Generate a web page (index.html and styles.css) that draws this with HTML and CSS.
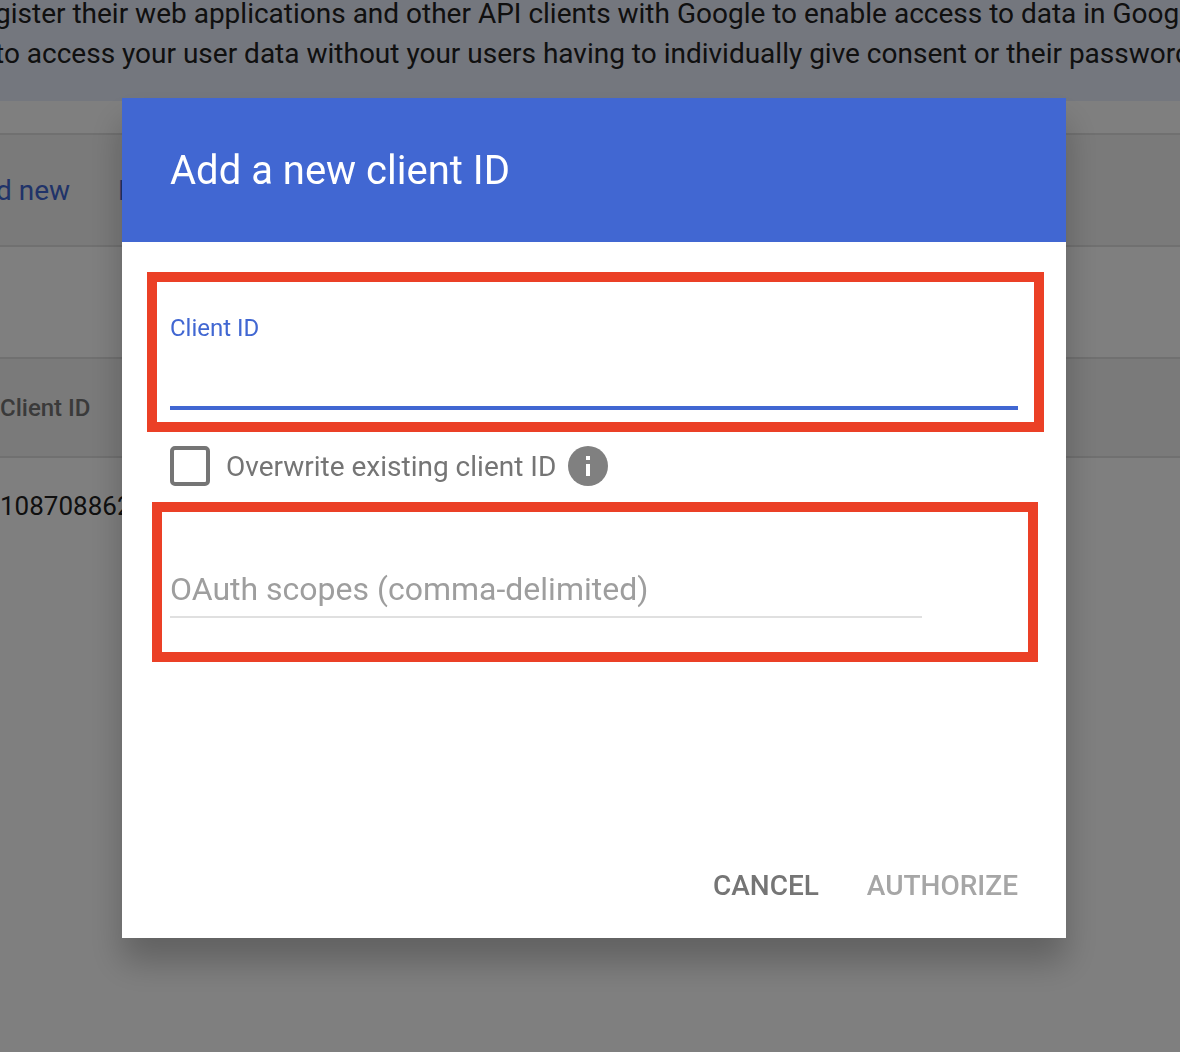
FILE: index.html
```
<!DOCTYPE html>
<html lang="en">
<head>
<meta charset="utf-8">
<meta name="viewport" content="width=device-width, initial-scale=1">
<title>Add a new client ID</title>
<link rel="stylesheet" href="styles.css">
</head>
<body>
<main class="page">
  <div class="banner">
    <p class="banner-line">gister their web applications and other API clients with Google to enable access to data in Goog</p>
    <p class="banner-line">to access your user data without your users having to individually give consent or their password</p>
  </div>
  <nav class="toolbar">
    <a class="toolbar-link" href="#add">d new</a>
    <a class="toolbar-link" href="#download">D</a>
  </nav>
  <div class="filter-row"></div>
  <table class="clients">
    <thead><tr><th scope="col">Client ID</th></tr></thead>
    <tbody><tr><td>108708862</td></tr></tbody>
  </table>
</main>

<div class="backdrop">
  <form class="dialog" role="dialog" aria-modal="true" aria-labelledby="dialog-title">
    <header class="dialog-header">
      <h1 class="dialog-title" id="dialog-title">Add a new client ID</h1>
    </header>
    <div class="dialog-body">
      <div class="field field-client highlight">
        <label class="field-label" for="client-id">Client ID</label>
        <input class="field-input" id="client-id" type="text">
      </div>
      <div class="option">
        <input class="option-box" id="overwrite" type="checkbox">
        <label class="option-label" for="overwrite">Overwrite existing client ID</label>
        <svg class="option-info" viewBox="0 0 40 40" role="img" aria-label="Info">
          <circle cx="20" cy="20" r="20" fill="#808080"/>
          <path d="M18 10h4v4h-4zM18 18h4v12h-4z" fill="#fff"/>
        </svg>
      </div>
      <div class="field field-scopes highlight">
        <input class="field-input" type="text" placeholder="OAuth scopes (comma-delimited)" aria-label="OAuth scopes (comma-delimited)">
      </div>
    </div>
    <footer class="dialog-actions">
      <button class="action" type="button">CANCEL</button>
      <button class="action" type="submit" disabled>AUTHORIZE</button>
    </footer>
  </form>
</div>
</body>
</html>
```
FILE: styles.css
```
* {
  box-sizing: border-box;
}

body {
  margin: 0;
  background: #fff;
  color: #212121;
  font-family: Roboto, "Liberation Sans", sans-serif;
}

.page {
  overflow: hidden;
}

.banner {
  padding-bottom: 27px;
  background: #e8eefd;
  font-size: 28px;
  line-height: 40px;
  white-space: nowrap;
}

.banner-line {
  margin: 0 -5px;
}

.banner-line:first-child {
  margin-top: -6px;
}

.toolbar {
  display: flex;
  align-items: center;
  gap: 52px;
  height: 114px;
  margin-top: 32px;
  border-top: 2px solid #e0e0e0;
  border-bottom: 2px solid #e0e0e0;
  background: #f5f5f5;
  font-size: 28px;
}

.toolbar-link {
  margin-left: -4px;
  color: #4167d2;
  text-decoration: none;
}

.filter-row {
  height: 110px;
}

.clients {
  width: 100%;
  border-collapse: separate;
  border-spacing: 0;
  text-align: left;
}

.clients th {
  height: 101px;
  padding: 0;
  border-top: 2px solid #e0e0e0;
  border-bottom: 2px solid #e0e0e0;
  background: #f5f5f5;
  color: #757575;
  font-size: 24px;
  font-weight: 500;
}

.clients td {
  height: 96px;
  padding: 0;
  font-size: 26px;
}

.backdrop {
  position: fixed;
  inset: 0;
  display: grid;
  place-items: center;
  padding: 0 0 16px 8px;
  background: rgba(0, 0, 0, 0.5);
}

.dialog {
  width: 80vw;
  background: #fff;
  box-shadow: 0 24px 32px rgba(0, 0, 0, 0.24);
}

.dialog-header {
  padding: 49px 48px 47px;
  background: #4167d2;
}

.dialog-title {
  margin: 0;
  color: #fff;
  font-size: 40px;
  font-weight: 400;
  line-height: 48px;
}

.dialog-body {
  padding: 40px 48px 0;
}

.highlight {
  position: relative;
}

/* Red frame drawn around the fields that must be filled in. */
.highlight::after {
  content: "";
  position: absolute;
  inset: -10px -26px -22px -23px;
  border: 10px solid #eb4026;
  pointer-events: none;
}

.field-input {
  display: block;
  width: 100%;
  height: 56px;
  padding: 0;
  border: 0;
  border-bottom: 2px solid #e0e0e0;
  border-radius: 0;
  outline: 0;
  background: transparent;
  color: #212121;
  font: 32px Roboto, "Liberation Sans", sans-serif;
}

.field-input::placeholder {
  color: #9e9e9e;
  opacity: 1;
}

.field-client {
  padding-top: 30px;
}

.field-label {
  display: block;
  margin-bottom: 10px;
  color: #4167d2;
  font-size: 24px;
  line-height: 32px;
}

.field-client .field-input {
  border-bottom: 4px solid #4167d2;
}

.option {
  display: flex;
  align-items: center;
  margin-top: 36px;
}

.option-box {
  appearance: none;
  width: 40px;
  height: 40px;
  margin: 0 16px 0 0;
  border: 4px solid #757575;
  border-radius: 5px;
  background: #fff;
}

.option-label {
  padding-top: 2px;
  color: #757575;
  font-size: 28px;
  line-height: 38px;
}

.option-info {
  width: 40px;
  height: 40px;
  margin-left: 12px;
}

.field-scopes {
  margin-top: 76px;
  padding-right: 96px;
}

.field-scopes.highlight::after {
  inset: -60px -20px -44px -18px;
}

.dialog-actions {
  display: flex;
  justify-content: flex-end;
  gap: 48px;
  padding: 248px 48px 32px;
}

.action {
  padding: 0;
  border: 0;
  background: none;
  color: #757575;
  font: 500 28px/40px Roboto, "Liberation Sans", sans-serif;
}

.action:disabled {
  color: #a6a6a6;
}
```
